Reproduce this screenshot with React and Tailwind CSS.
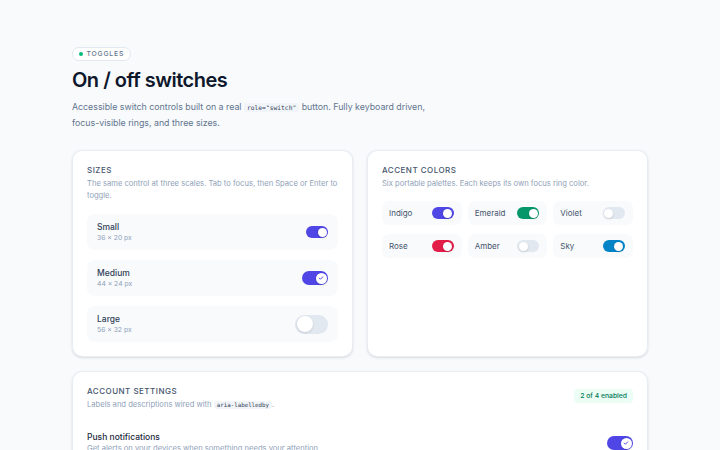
import { useState } from "react";

const Check = ({ size = 6, color = "#4f46e5" }) => (
  <svg width={size} height={size} viewBox="0 0 12 12" fill="none">
    <path d="M2.5 6.2l2.3 2.3L9.5 3.8" stroke={color} strokeWidth="2" strokeLinecap="round" strokeLinejoin="round" />
  </svg>
);

const SIZES = {
  sm: { track: "w-[22px] h-[12px]", knob: "w-[9px] h-[9px]", on: "translate-x-[10px]" },
  md: { track: "w-[26px] h-[14px]", knob: "w-[11px] h-[11px]", on: "translate-x-[12px]" },
  lg: { track: "w-[33px] h-[19px]", knob: "w-[16px] h-[16px]", on: "translate-x-[14px]" },
};

const Switch = ({ checked, onChange, size = "sm", color = "bg-[#4f46e5]", check = false, hex = "#4f46e5" }) => {
  const s = SIZES[size];
  return (
    <button
      role="switch"
      aria-checked={checked}
      onClick={() => onChange(!checked)}
      className={`relative inline-flex shrink-0 items-center rounded-full p-[1.5px] transition-colors ${s.track} ${
        checked ? color : "bg-slate-200"
      }`}
    >
      <span
        className={`flex items-center justify-center rounded-full bg-white shadow-sm transition-transform ${s.knob} ${
          checked ? s.on : "translate-x-0"
        }`}
      >
        {check && checked && <Check size={6} color={hex} />}
      </span>
    </button>
  );
};

const SizeRow = ({ label, dims, size, initial, check }) => {
  const [on, setOn] = useState(initial);
  return (
    <div className="flex h-[36px] items-center justify-between rounded-[8px] bg-slate-50 px-[10px]">
      <div className="flex flex-col">
        <span className="text-[8.5px] leading-[12px] font-medium text-slate-700">{label}</span>
        <span className="text-[6.8px] leading-[10px] text-slate-400">{dims}</span>
      </div>
      <Switch checked={on} onChange={setOn} size={size} check={check} />
    </div>
  );
};

const accents = [
  { name: "Indigo", bg: "bg-[#4f46e5]", on: true },
  { name: "Emerald", bg: "bg-[#059669]", on: true },
  { name: "Violet", bg: "bg-[#7c3aed]", on: false },
  { name: "Rose", bg: "bg-[#e11d48]", on: true },
  { name: "Amber", bg: "bg-[#d97706]", on: false },
  { name: "Sky", bg: "bg-[#0284c7]", on: true },
];

const AccentCell = ({ item }) => {
  const [on, setOn] = useState(item.on);
  return (
    <div className="flex h-[24px] items-center justify-between rounded-[7px] bg-slate-50 pl-[7px] pr-[8px]">
      <span className="text-[8px] text-slate-600">{item.name}</span>
      <Switch checked={on} onChange={setOn} color={item.bg} />
    </div>
  );
};

const CardHead = ({ title, children }) => (
  <div>
    <h2 className="text-[8px] leading-[12px] font-medium uppercase tracking-[0.06em] text-slate-600">{title}</h2>
    <p className="mt-[2px] text-[7.6px] leading-[12px] text-slate-400">{children}</p>
  </div>
);

export default function App() {
  const [push, setPush] = useState(true);

  return (
    <div className="min-h-screen bg-[#f8fafc] px-[72px] pt-[47px] font-['Inter',sans-serif]">
      <div className="w-[576px]">
        <div className="flex">
          <span className="flex h-[14px] items-center gap-[4px] rounded-full border border-slate-200 bg-white px-[6px] text-[6.8px] leading-none font-medium tracking-[0.12em] text-slate-500">
            <span className="h-[3.5px] w-[3.5px] rounded-full bg-emerald-500" />
            TOGGLES
          </span>
        </div>

        <h1 className="mt-[6px] text-[20px] leading-[26px] font-semibold tracking-[-0.025em] text-slate-900">
          On / off switches
        </h1>
        <p className="mt-[6px] text-[8.8px] leading-[15px] text-slate-500">
          Accessible switch controls built on a real{" "}
          <code className="rounded-[3px] bg-slate-100 px-[3px] py-[1px] font-['DejaVu_Sans_Mono',monospace] text-[6.3px] text-slate-700">
            role="switch"
          </code>{" "}
          button. Fully keyboard driven,
          <br />
          focus-visible rings, and three sizes.
        </p>

        <div className="mt-[20px] grid grid-cols-2 gap-[14px]">
          <div className="rounded-[10px] border border-slate-200/80 bg-white p-[14px] pt-[13px] shadow-sm">
            <CardHead title="Sizes">
              The same control at three scales. Tab to focus, then Space or Enter to toggle.
            </CardHead>
            <div className="mt-[12px] flex flex-col gap-[10px]">
              <SizeRow label="Small" dims="36 × 20 px" size="sm" initial={true} />
              <SizeRow label="Medium" dims="44 × 24 px" size="md" initial={true} check />
              <SizeRow label="Large" dims="56 × 32 px" size="lg" initial={false} />
            </div>
          </div>

          <div className="rounded-[10px] border border-slate-200/80 bg-white p-[14px] pt-[13px] shadow-sm">
            <CardHead title="Accent colors">Six portable palettes. Each keeps its own focus ring color.</CardHead>
            <div className="mt-[11px] grid grid-cols-3 gap-x-[6px] gap-y-[9px]">
              {accents.map((a) => (
                <AccentCell key={a.name} item={a} />
              ))}
            </div>
          </div>
        </div>

        <div className="mt-[14px] rounded-[10px] border border-slate-200/80 bg-white p-[14px] pt-[13px] shadow-sm">
          <div className="flex items-start justify-between">
            <div>
              <h2 className="text-[8px] leading-[12px] font-medium uppercase tracking-[0.06em] text-slate-600">
                Account settings
              </h2>
              <p className="mt-[2px] text-[7.6px] leading-[12px] text-slate-400">
                Labels and descriptions wired with{" "}
                <code className="rounded-[3px] bg-slate-100 px-[3px] py-[1px] font-['DejaVu_Sans_Mono',monospace] text-[5.8px] text-slate-700">
                  aria-labelledby
                </code>
                .
              </p>
            </div>
            <span className="mt-[4px] rounded-[4px] bg-emerald-50 px-[6px] py-[3px] text-[6.8px] leading-[8px] font-medium text-emerald-700">
              2 of 4 enabled
            </span>
          </div>

          <div className="mt-[20px] flex items-center justify-between">
            <div>
              <div className="text-[8.5px] leading-[12px] font-medium text-slate-800">Push notifications</div>
              <div className="text-[7.6px] leading-[12px] text-slate-400">
                Get alerts on your devices when something needs your attention.
              </div>
            </div>
            <Switch checked={push} onChange={setPush} size="md" check />
          </div>
        </div>
      </div>
    </div>
  );
}
